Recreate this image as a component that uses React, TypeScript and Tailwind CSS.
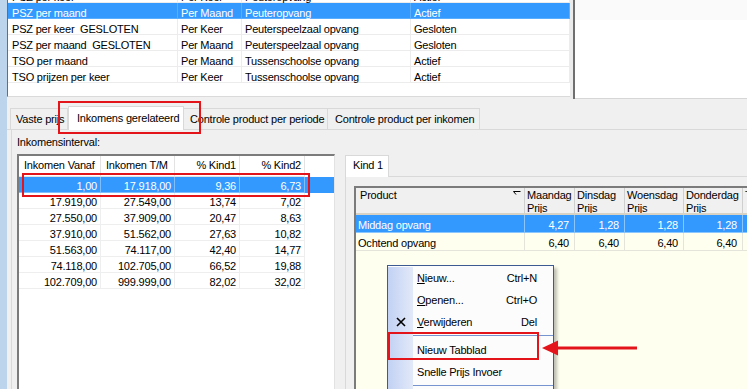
import React from 'react';

const topRows = [
  ['PSZ per keer', 'Per Keer', 'Peuteropvang', 'Actief'],
  ['PSZ per maand', 'Per Maand', 'Peuteropvang', 'Actief'],
  ['PSZ per keer  GESLOTEN', 'Per Keer', 'Peuterspeelzaal opvang', 'Gesloten'],
  ['PSZ per maand  GESLOTEN', 'Per Maand', 'Peuterspeelzaal opvang', 'Gesloten'],
  ['TSO per maand', 'Per Maand', 'Tussenschoolse opvang', 'Actief'],
  ['TSO prijzen per keer', 'Per Keer', 'Tussenschoolse opvang', 'Actief'],
];
const topWidths = [170, 64, 169, 159];

const incomeRows = [
  ['1,00', '17.918,00', '9,36', '6,73'],
  ['17.919,00', '27.549,00', '13,74', '7,02'],
  ['27.550,00', '37.909,00', '20,47', '8,63'],
  ['37.910,00', '51.562,00', '27,63', '10,82'],
  ['51.563,00', '74.117,00', '42,40', '14,77'],
  ['74.118,00', '102.705,00', '66,52', '19,88'],
  ['102.709,00', '999.999,00', '82,02', '32,02'],
];
const incomeWidths = [82, 74, 65, 65];

const productRows = [
  ['Middag opvang', '4,27', '1,28', '1,28', '1,28', ''],
  ['Ochtend opvang', '6,40', '6,40', '6,40', '6,40', ''],
];
const productWidths = [169, 50, 50, 59, 59, 60];

function TopTable() {
  return (
    <div className="flex h-[100px] shrink-0">
      <div className="flex w-[563px] flex-col">
        <div className="h-[97px] overflow-hidden border-b border-l border-b-[#dadada] border-l-[#5d7089] bg-white">
          <div className="-mt-[13px]">
            {topRows.map((row, i) => {
              const sel = i === 1;
              return (
                <div key={i} className={sel ? 'flex h-[16px] bg-[#3399ff] text-white' : 'flex h-[16px]'}>
                  {row.map((cell, j) => (
                    <div
                      key={j}
                      style={{ width: topWidths[j] }}
                      className={
                        'h-full shrink-0 whitespace-pre border-b border-r pt-[4px] leading-[12px] ' +
                        (j === 0 ? 'pl-[4px] ' : 'pl-[3px] ') +
                        (sel ? 'border-[#5aaeff]' : 'border-[#ececec]')
                      }
                    >
                      {cell}
                    </div>
                  ))}
                </div>
              );
            })}
          </div>
        </div>
      </div>
      <div className="h-[99px] w-[3px] bg-[#ebebeb]" />
      <div className="h-[99px] w-[2px] bg-[#6f6f6f]" />
      <div className="flex h-[99px] flex-1 flex-col border-b border-[#d6d6d6] bg-white">
        <div className="h-[20px] bg-[#fafafa]" />
      </div>
    </div>
  );
}

function IncomeGrid() {
  return (
    <div className="flex w-[318px] shrink-0 flex-col self-stretch border-l-2 border-r border-t-2 border-l-[#7b7b7b] border-r-[#e2e2e2] border-t-[#7b7b7b] bg-white">
      <div className="flex h-[21px]">
        {['Inkomen Vanaf', 'Inkomen T/M', '% Kind1', '% Kind2'].map((h, j) => (
          <div
            key={h}
            style={{ width: incomeWidths[j] }}
            className={
              'h-full shrink-0 border-b border-r border-[#e3e3e3] pt-[3px] ' +
              (j < 2 ? 'pl-[5px]' : 'pr-[3px] text-right')
            }
          >
            {h}
          </div>
        ))}
      </div>
      {incomeRows.map((row, i) => {
        const sel = i === 0;
        return (
          <div key={i} className={sel ? 'flex h-[16px] w-full bg-[#3399ff] text-white' : 'flex h-[16px]'}>
            {row.map((cell, j) => (
              <div
                key={j}
                style={{ width: incomeWidths[j] }}
                className={
                  'h-full shrink-0 border-b border-r pr-[3px] pt-[3px] text-right leading-[12px] ' +
                  (sel ? 'border-[#7fbfff]' : 'border-[#eeeeee]')
                }
              >
                {cell}
              </div>
            ))}
          </div>
        );
      })}
    </div>
  );
}

function ProductGrid() {
  const heads: [string, string][] = [
    ['Product', ''],
    ['Maandag', 'Prijs'],
    ['Dinsdag', 'Prijs'],
    ['Woensdag', 'Prijs'],
    ['Donderdag', 'Prijs'],
    ['T', ''],
  ];
  return (
    <div className="flex flex-1 flex-col overflow-hidden border-l-2 border-t-2 border-[#7b7b7b] bg-[#fffff0]">
      <div className="flex h-[27px] shrink-0 border-b-2 border-[#d8d2c4] bg-[#f0f0f0]">
        {heads.map(([a, b], j) => (
          <div
            key={j}
            style={{ width: productWidths[j] }}
            className={
              'flex h-full shrink-0 justify-between overflow-hidden border-r border-[#cfcfcf] pt-[1px] ' +
              (j === 0 ? 'pl-[4px]' : 'pl-[2px]')
            }
          >
            <div>
              <div>{a}</div>
              {b && <div>{b}</div>}
            </div>
            {j === 0 && (
              <svg width="8" height="5" viewBox="0 0 8 5" className="mr-[3px] mt-[2px]">
                <path d="M0.5 0.5 H7.5 M0.5 0.5 L3 3.5" stroke="#000" strokeWidth="1" fill="none" />
              </svg>
            )}
          </div>
        ))}
      </div>
      {productRows.map((row, i) => {
        const sel = i === 0;
        return (
          <div key={i} className={sel ? 'flex h-[18px] bg-[#3399ff] text-white' : 'flex h-[18px]'}>
            {row.map((cell, j) => (
              <div
                key={j}
                style={{ width: productWidths[j] }}
                className={
                  'h-full shrink-0 border-b border-r pt-[4px] ' +
                  (j === 0 ? 'pl-[2px] ' : 'pr-[5px] text-right ') +
                  (sel ? 'border-[#8cc6ff]' : 'border-[#e4e4da]')
                }
              >
                {cell}
              </div>
            ))}
          </div>
        );
      })}
    </div>
  );
}

function MenuItem({ label, hot, rest, shortcut, icon }: { label?: string; hot?: string; rest?: string; shortcut?: string; icon?: boolean }) {
  return (
    <div className="flex h-[22px]">
      <div className="flex w-[25px] items-center justify-center bg-linear-to-r from-[#c2d1f3] to-[#e2e9f9]">
        {icon && (
          <svg width="10" height="10" viewBox="0 0 10 10">
            <path d="M1 1 L9 9 M9 1 L1 9" stroke="#000" strokeWidth="1.6" />
          </svg>
        )}
      </div>
      <div className="flex flex-1 items-center justify-between pl-[4px] pr-[16px]">
        <span>
          {hot ? <span className="underline">{hot}</span> : null}
          {hot ? rest : label}
        </span>
        {shortcut && <span>{shortcut}</span>}
      </div>
    </div>
  );
}

function Separator() {
  return (
    <div className="flex h-[6px]">
      <div className="w-[25px] bg-linear-to-r from-[#c2d1f3] to-[#e2e9f9]" />
      <div className="flex-1 pt-[2px]">
        <div className="h-[1px] bg-[#7894d0]" />
      </div>
    </div>
  );
}

export default function App() {
  return (
    <div className="relative flex h-[389px] w-[747px] overflow-hidden whitespace-nowrap bg-[#f0f0f0] font-['Liberation_Sans',Arial,sans-serif] text-[11px] leading-[13px] tracking-[-0.2px] text-black">
      <div className="w-[7px] shrink-0 bg-[#bdd4ed]" />
      <div className="flex min-w-0 flex-1 flex-col">
        <TopTable />

        <div className="flex h-[30px] shrink-0 items-end border-b border-[#d9d9d9] pl-[3px]">
          <div className="flex h-[21px] w-[58px] items-center border border-b-0 border-[#d9d9d9] pl-[5px]">Vaste prijs</div>
          <div className="-mb-[1px] flex h-[24px] w-[116px] items-center border border-b-0 border-[#d9d9d9] bg-white pl-[8px]">
            Inkomens gerelateerd
          </div>
          <div className="flex h-[21px] w-[144px] items-center border border-b-0 border-l-0 border-[#d9d9d9] pl-[6px]">
            Controle product per periode
          </div>
          <div className="flex h-[21px] w-[152px] items-center border border-b-0 border-l-0 border-[#d9d9d9] pl-[7px]">
            Controle product per inkomen
          </div>
        </div>

        <div className="ml-[4px] flex min-h-0 flex-1 flex-col border-l border-[#dadada] pl-[5px]">
          <div className="pt-[6px]">Inkomensinterval:</div>
          <div className="mt-[5px] flex min-h-0 flex-1 items-start">
            <IncomeGrid />
            <div className="ml-[10px] mt-[1px] flex min-w-0 flex-1 flex-col self-stretch">
              <div className="flex h-[22px] shrink-0">
                <div className="w-[44px] border border-b-0 border-[#d9d9d9] bg-white pl-[7px] pt-[3px]">Kind 1</div>
                <div className="flex-1 border-b border-[#d9d9d9]" />
              </div>
              <div className="flex min-h-0 flex-1 flex-col border-l border-[#d9d9d9] pl-[8px] pt-[9px]">
                <ProductGrid />
              </div>
            </div>
          </div>
        </div>
      </div>

      {/* context menu */}
      <div className="absolute left-[387px] top-[265px] w-[167px] border border-[#3d5a93] bg-[#fcfcfc] pt-[1px] shadow-[3px_3px_3px_rgba(0,0,0,0.25)]">
        <MenuItem hot="N" rest="ieuw..." shortcut="Ctrl+N" />
        <MenuItem hot="O" rest="penen..." shortcut="Ctrl+O" />
        <MenuItem hot="V" rest="erwijderen" shortcut="Del" icon />
        <Separator />
        <MenuItem label="Nieuw Tabblad" />
        <MenuItem label="Snelle Prijs Invoer" />
        <Separator />
        <MenuItem label="" />
      </div>

      {/* annotations */}
      <div className="absolute left-[58px] top-[101px] h-[33px] w-[143px] border-2 border-[#e3151a]" />
      <div className="absolute left-[22px] top-[173px] h-[24px] w-[288px] border-2 border-[#e3151a]" />
      <div className="absolute left-[388px] top-[332px] h-[28px] w-[151px] border-2 border-[#e3151a]" />
      <svg className="absolute left-[540px] top-[338px]" width="100" height="20" viewBox="0 0 100 20">
        <polygon points="2,10 18,2.5 18,17.5" fill="#e3151a" />
        <rect x="16" y="8.5" width="81" height="3" fill="#e3151a" />
      </svg>
    </div>
  );
}
